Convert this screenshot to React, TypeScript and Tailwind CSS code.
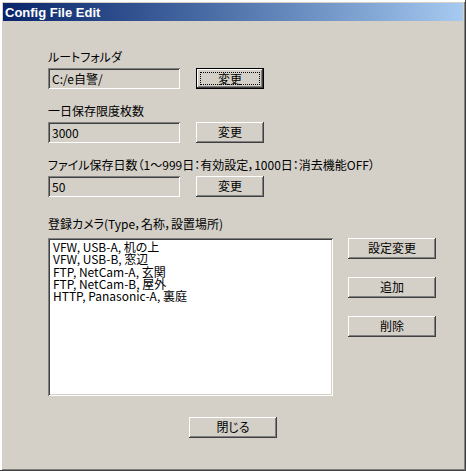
import React from "react";

const raised =
  "shadow-[inset_-1px_-1px_0_#404040,inset_1px_1px_0_#ffffff,inset_-2px_-2px_0_#808080]";
const sunken =
  "shadow-[inset_1px_1px_0_#808080,inset_-1px_-1px_0_#ffffff,inset_2px_2px_0_#404040,inset_-2px_-2px_0_#d4d0c8]";

function Btn({ label, w, def }: { label: string; w: string; def?: boolean }) {
  if (def) {
    return (
      <div className={`${w} h-[21px] border border-black bg-[#d4d0c8] flex`}>
        <div className="flex-1 shadow-[inset_-1px_-1px_0_#404040,inset_1px_1px_0_#ffffff,inset_-2px_-2px_0_#808080] p-[3px] flex">
          <div className="flex-1 border border-dotted border-black flex items-center justify-center text-[12px] leading-[12px]">
            {label}
          </div>
        </div>
      </div>
    );
  }
  return (
    <div
      className={`${w} h-[21px] bg-[#d4d0c8] ${raised} flex items-center justify-center text-[12px] leading-[12px] pb-[1px]`}
    >
      {label}
    </div>
  );
}

function Field({ value }: { value: string }) {
  return (
    <div
      className={`w-[132px] h-[21px] bg-[#d4d0c8] ${sunken} flex items-center pl-[4px] text-[12px] leading-[12px]`}
    >
      {value}
    </div>
  );
}

function Group({ label, value, def, mt }: { label: string; value: string; def?: boolean; mt: string }) {
  return (
    <div className={`flex flex-col ${mt}`}>
      <div className="h-[16px] leading-[16px] text-[12px] whitespace-nowrap">{label}</div>
      <div className="flex items-center gap-[16px] mt-[3px]">
        <Field value={value} />
        <Btn label="変更" w="w-[68px]" def={def} />
      </div>
    </div>
  );
}

export default function App() {
  const items = [
    "VFW, USB-A, 机の上",
    "VFW, USB-B, 窓辺",
    "FTP, NetCam-A, 玄関",
    "FTP, NetCam-B, 屋外",
    "HTTP, Panasonic-A, 裏庭",
  ];
  return (
    <div className="w-[466px] h-[471px] bg-[#d4d0c8] p-[3px] flex flex-col shadow-[inset_-1px_-1px_0_#404040,inset_2px_2px_0_#ffffff,inset_-2px_-2px_0_#808080] font-['Noto_Sans_CJK_JP',sans-serif] [font-feature-settings:'palt'] text-black">
      <div className="h-[18px] bg-gradient-to-r from-[#0a246a] to-[#a6caf0] flex items-center pl-[2px]">
        <span className="font-['Liberation_Sans',sans-serif] font-bold text-[13px] leading-[13px] text-white">
          Config File Edit
        </span>
      </div>
      <div className="flex flex-col pl-[45px]">
        <Group label="ルートフォルダ" value="C:/e自警/" def mt="mt-[28px]" />
        <Group label="一日保存限度枚数" value="3000" mt="mt-[14px]" />
        <Group
          label="ファイル保存日数（1～999日：有効設定，1000日：消去機能OFF）"
          value="50"
          mt="mt-[14px]"
        />
        <div className="mt-[19px] h-[16px] leading-[16px] text-[12px] whitespace-nowrap">
          登録カメラ(Type，名称，設置場所)
        </div>
        <div className="flex mt-[6px] gap-[15px]">
          <div className={`w-[285px] h-[158px] bg-white ${sunken} pt-[3px] pl-[5px]`}>
            {items.map((t) => (
              <div key={t} className="text-[12px] leading-[12.25px] whitespace-nowrap">
                {t}
              </div>
            ))}
          </div>
          <div className="flex flex-col gap-[18px]">
            <Btn label="設定変更" w="w-[88px]" />
            <Btn label="追加" w="w-[88px]" />
            <Btn label="削除" w="w-[88px]" />
          </div>
        </div>
      </div>
      <div className="flex justify-center mt-[21px]">
        <Btn label="閉じる" w="w-[88px]" />
      </div>
    </div>
  );
}
